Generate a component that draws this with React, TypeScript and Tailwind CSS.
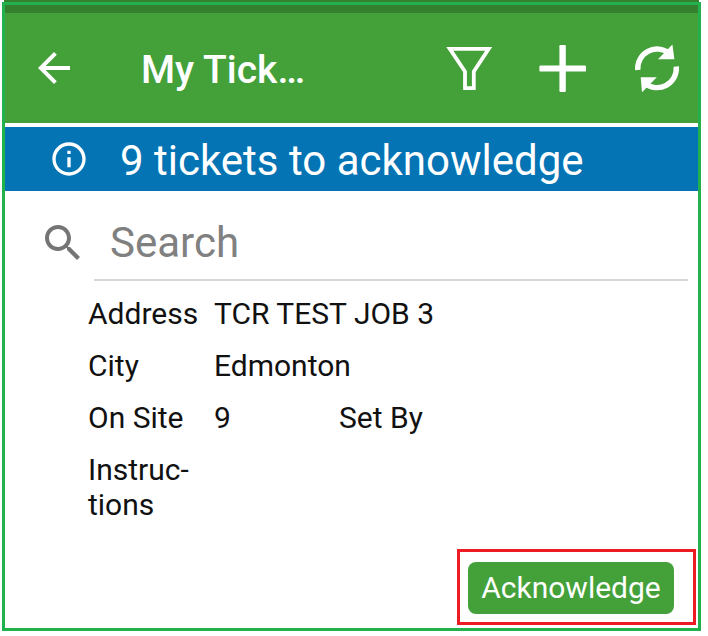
import React, { useState } from 'react';

interface Field {
  label: string;
  value: string;
}

interface TicketRow extends Field {
  extra?: Field;
}

const rows: TicketRow[] = [
  { label: 'Address', value: 'TCR TEST JOB 3' },
  { label: 'City', value: 'Edmonton' },
  { label: 'On Site', value: '9', extra: { label: 'Set By', value: '' } },
  { label: 'Instruc-tions', value: '' },
];

const BackIcon = () => (
  <svg viewBox="0 0 24 24" className="size-12" fill="currentColor" aria-hidden="true">
    <path d="M20 11H7.83l5.59-5.59L12 4l-8 8 8 8 1.41-1.41L7.83 13H20v-2z" />
  </svg>
);

const FilterIcon = () => (
  <svg viewBox="0 0 48 48" className="size-12" fill="none" stroke="currentColor" strokeWidth="3.8" aria-hidden="true">
    <path d="M4.8 4.9H43.7L28.8 27.5V44.1H20V27.5Z" />
  </svg>
);

const PlusIcon = () => (
  <svg viewBox="0 0 48 48" className="size-12" fill="currentColor" aria-hidden="true">
    <rect x="20.4" y="1" width="6.4" height="47" rx="1.2" />
    <rect x="0.4" y="21.4" width="46.6" height="6.2" rx="1.2" />
  </svg>
);

const RefreshIcon = () => (
  <svg viewBox="0 0 48 48" className="size-12 overflow-visible" aria-hidden="true">
    <g fill="none" stroke="currentColor" strokeWidth="5.4">
      <path d="M4.8 26A19.3 19.3 0 0 1 36 9.2" />
      <path d="M43.3 22.6A19.3 19.3 0 0 1 12 39.4" />
    </g>
    <g fill="currentColor">
      <path d="M39.4 0.4L41.4 15.2H25Z" />
      <path d="M7.7 33.3H23.8L9 48.3Z" />
    </g>
  </svg>
);

const InfoIcon = () => (
  <svg viewBox="0 0 24 24" className="size-10" fill="currentColor" aria-hidden="true">
    <path d="M11 7h2v2h-2zm0 4h2v6h-2zm1-9C6.48 2 2 6.48 2 12s4.48 10 10 10 10-4.48 10-10S17.52 2 12 2zm0 18c-4.41 0-8-3.59-8-8s3.59-8 8-8 8 3.59 8 8-3.59 8-8 8z" />
  </svg>
);

const SearchIcon = () => (
  <svg viewBox="0 0 24 24" className="size-12" fill="currentColor" aria-hidden="true">
    <path d="M15.5 14h-.79l-.28-.27C15.41 12.59 16 11.11 16 9.5 16 5.91 13.09 3 9.5 3S3 5.91 3 9.5 5.91 16 9.5 16c1.61 0 3.09-.59 4.23-1.57l.27.28v.79l5 4.99L20.49 19l-4.99-5zm-6 0C7.01 14 5 11.99 5 9.5S7.01 5 9.5 5 14 7.01 14 9.5 11.99 14 9.5 14z" />
  </svg>
);

const App: React.FC = () => {
  const [search, setSearch] = useState('');

  return (
    <div className="bg-white pl-0.5 pr-[7px] font-[Roboto,sans-serif] text-[#111111]">
      <div className="mx-0.5 h-0.5 bg-[#35802f]" />
      <main className="border-3 border-[#22b14c]">
        {/* Header */}
        <div className="h-2 bg-[#35802f]" />
        <header className="flex h-[110px] items-center bg-[#44a13a] pl-[25px] pr-[17px] text-white">
          <button type="button" aria-label="Back">
            <BackIcon />
          </button>
          <h1 className="ml-[63px] flex-1 truncate pt-1 text-[39px] leading-[48px] font-medium">My Tick…</h1>
          <div className="flex gap-[46px]">
            <button type="button" aria-label="Filter">
              <FilterIcon />
            </button>
            <button type="button" aria-label="Add ticket">
              <PlusIcon />
            </button>
            <button type="button" aria-label="Refresh">
              <RefreshIcon />
            </button>
          </div>
        </header>

        {/* Notice */}
        <div className="mt-1 flex h-16 items-center gap-[31px] bg-[#0474b5] pl-11 text-white">
          <InfoIcon />
          <p className="pt-1 text-[42px] leading-[48px]">9 tickets to acknowledge</p>
        </div>

        {/* Search */}
        <div className="flex pl-[34px] pr-2.5 text-[#757575]">
          <label htmlFor="search" aria-label="Search" className="pt-7">
            <SearchIcon />
          </label>
          <input
            id="search"
            type="text"
            placeholder="Search"
            value={search}
            onChange={e => setSearch(e.target.value)}
            className="ml-[7px] h-[90px] min-w-0 flex-1 border-b-2 border-[#d6d6d6] pt-3.5 pl-4 text-[42px] outline-none placeholder:text-[#808080]"
          />
        </div>

        {/* Ticket */}
        <dl className="flex flex-col gap-[17px] pt-[15px] pl-[83px] text-[30px] leading-[35px]">
          {rows.map(row => (
            <div key={row.label} className="flex">
              <dt className="w-[126px] pr-3">{row.label}</dt>
              <dd className={row.extra ? 'w-[125px]' : 'flex-1'}>{row.value}</dd>
              {row.extra && (
                <>
                  <dt>{row.extra.label}</dt>
                  <dd>{row.extra.value}</dd>
                </>
              )}
            </div>
          ))}
        </dl>

        <div className="mt-[27px] mr-0.5 mb-[3px] flex justify-end">
          <div className="border-3 border-[#ed1c24] pt-2.5 pr-[19px] pb-2 pl-2">
            <button
              type="button"
              className="block h-[52px] w-[206px] rounded-lg bg-[#44a13a] text-[30px] leading-[50px] text-white"
            >
              Acknowledge
            </button>
          </div>
        </div>
      </main>
    </div>
  );
};

export default App;
